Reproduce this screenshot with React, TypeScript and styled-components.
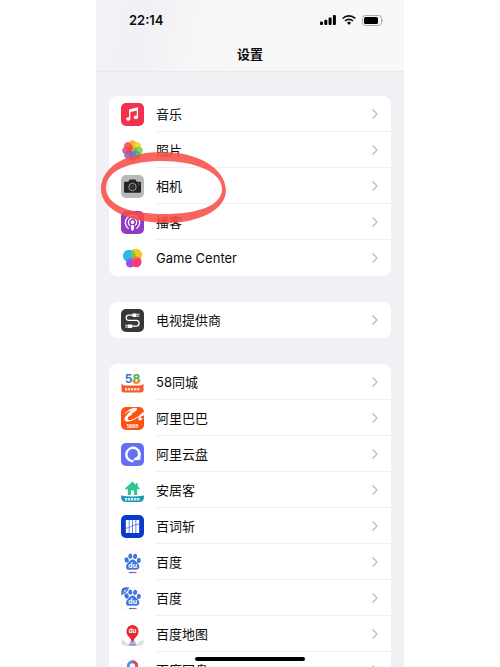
import React from "react";
import styled, { createGlobalStyle } from "styled-components";

const GlobalStyle = createGlobalStyle`
  * { box-sizing: border-box; }
  body {
    margin: 0;
    background: #fff;
    color: #0c0c0d;
    font-family: Inter, "Noto Sans CJK SC", sans-serif;
    overflow: hidden;
  }
`;

const Phone = styled.div`
  height: 100vh;
  margin: 0 96px;
  background: #f0f0f5;
  overflow: hidden;
`;

const Header = styled.header`
  height: 72px;
  background: linear-gradient(100deg, #f3f3f6 0%, #f0f0f5 15%, #f7f7f8 35%, #f8f8f8 100%);
  border-bottom: 1px solid #e9e9ec;
`;

const StatusBar = styled.div`
  display: flex;
  align-items: center;
  justify-content: space-between;
  height: 40px;
  padding: 0 20px 0 33px;
`;

const Clock = styled.time`
  font-size: 13px;
  font-weight: 600;
  line-height: 16px;
`;

const StatusIcons = styled.div`
  display: flex;
  align-items: center;
  gap: 6px;
`;

const Title = styled.h1`
  margin: 4px 0 0;
  font-size: 13px;
  font-weight: 700;
  line-height: 20px;
  text-align: center;
`;

const Content = styled.main`
  display: flex;
  flex-direction: column;
  gap: 26px;
  padding: 24px 13px 0;
`;

const Group = styled.ul`
  margin: 0;
  padding: 0;
  list-style: none;
  background: #fff;
  border-radius: 8px;
`;

const Item = styled.li`
  position: relative;
  display: flex;
  padding-left: 12px;
`;

const RowLink = styled.a`
  display: flex;
  flex: 1;
  gap: 12px;
  align-items: center;
  color: inherit;
  text-decoration: none;
`;

const RowBody = styled.span`
  display: flex;
  flex: 1;
  align-items: center;
  justify-content: space-between;
  height: 36px;
  padding-right: 12px;
  border-bottom: 1px solid #f0f0f2;
  font-size: 13px;
  line-height: 20px;

  ${Item}:last-child & {
    border-bottom-color: transparent;
  }
`;

const Icon = styled.svg`
  flex: none;
  width: 23px;
  height: 23px;
`;

const Circle = styled.svg`
  position: absolute;
  z-index: 1;
  left: -8px;
  top: -16px;
  width: 125px;
  height: 72px;
  pointer-events: none;
`;

const HomeBar = styled.div`
  position: fixed;
  bottom: 6px;
  left: 50%;
  width: 110px;
  height: 4px;
  margin-left: -55px;
  border-radius: 2px;
  background: #000;
`;

const Tile = ({ fill = "#fff", stroke = "none" }: { fill?: string; stroke?: string }) => (
  <rect x="0" y="0" width="23" height="23" rx="5" fill={fill} stroke={stroke} strokeWidth="0.6" />
);

const petals = ["#f7a51c", "#e6d21e", "#8bc53f", "#38b58b", "#4b83d4", "#8c62b8", "#d3478c", "#ee4b38"];

const Paw = () => (
  <g fill="#3d76dc">
    <ellipse cx="5.6" cy="9" rx="2.1" ry="2.7" transform="rotate(-15 5.6 9)" />
    <ellipse cx="9.3" cy="5.2" rx="2" ry="2.6" />
    <ellipse cx="14.1" cy="5.4" rx="2" ry="2.6" transform="rotate(12 14.1 5.4)" />
    <ellipse cx="17.8" cy="9.4" rx="2" ry="2.6" transform="rotate(15 17.8 9.4)" />
    <path d="M11.7 8.6c2.2 0 3.1 2 4.6 3.4 3.1 2.6 2.7 6.8-1.2 6.8-1.3 0-2.1-.3-3.400-.3s-2.1.3-3.500.3c-3.700 0-4.300-4.300-1.200-6.900 1.600-1.400 2.500-3.300 4.700-3.300Z" />
    <text x="11.7" y="17" fill="#fff" fontSize="7" fontWeight="700" textAnchor="middle">du</text>
    <path d="M8 21.5h4" stroke="#4b70c8" strokeWidth="1.2" />
    <path d="M12 21.5h3.5" stroke="#dd5058" strokeWidth="1.2" />
  </g>
);

const art: Record<string, React.ReactNode> = {
  music: (
    <>
      <Tile fill="#f5304f" />
      <path d="M8.7 15.8V6.9L16.4 5v9.2" fill="none" stroke="#fff" strokeWidth="1.3" />
      <path d="M8.7 6.6 16.4 4.8V7.6L8.7 9.3Z" fill="#fff" />
      <ellipse cx="7.2" cy="16" rx="2.2" ry="1.8" fill="#fff" />
      <ellipse cx="14.9" cy="14.4" rx="2.2" ry="1.8" fill="#fff" />
    </>
  ),
  photos: (
    <g>
      {petals.map((color, i) => (
        <rect key={color} x="8" y="1.2" width="7" height="9.8" rx="3.5" fill={color} opacity="0.85" transform={`rotate(${i * 45} 11.5 11.5)`} />
      ))}
    </g>
  ),
  camera: (
    <>
      <Tile fill="#b9b9bc" />
      <path d="M4 6.8h3.3l1.3-2.3h5.8l1.3 2.3H19q1 0 1 1v9q0 1-1 1H4q-1 0-1-1v-9q0-1 1-1Z" fill="#232427" />
      <circle cx="11.5" cy="12" r="3.7" fill="none" stroke="#a9a9ac" strokeWidth="0.9" />
      <circle cx="11.5" cy="12" r="2" fill="#38393c" />
      <circle cx="17.8" cy="8.9" r="0.6" fill="#e2b83a" />
    </>
  ),
  podcasts: (
    <>
      <Tile fill="#8e3cc6" />
      <g fill="none" stroke="#fff" strokeWidth="1.3" strokeLinecap="round">
        <path d="M7.2 17.2a7.2 7.2 0 1 1 8.6 0" />
        <path d="M8.5 14.1a4.1 4.1 0 1 1 6 0" />
      </g>
      <circle cx="11.5" cy="11.1" r="1.9" fill="#fff" />
      <path d="M9.7 14.6q1.8-1 3.6 0l-.6 4.4q-1.2 1.2-2.4 0Z" fill="#fff" />
    </>
  ),
  game: (
    <>
      <circle cx="14.8" cy="8" r="6.2" fill="#f8c51c" />
      <circle cx="8.2" cy="9" r="6.2" fill="#2fb4ee" />
      <path d="M11 3.4a6.2 6.2 0 0 1 2.2 9.3A6.2 6.2 0 0 1 11 3.4Z" fill="#62ce49" />
      <circle cx="9.2" cy="16.2" r="4.3" fill="#9b50e8" />
      <circle cx="15.4" cy="15" r="5.2" fill="#f63c7c" />
      <path d="M10.4 14a5.2 5.2 0 0 1 9.4-2q-5-1.5-9.4 2Z" fill="#f97042" />
    </>
  ),
  tv: (
    <>
      <Tile fill="#38383a" />
      <path d="M13 6.2H7.8a2.6 2.6 0 0 0 0 5.2h7.4a2.9 2.9 0 0 1 0 5.8H11" fill="none" stroke="#fff" strokeWidth="1.3" />
      <path d="M11.5 4.4h4v3.6h-4ZM7 15.4h4.2V19H7Z" fill="#fff" />
      <path d="M15.5 5.3h3M15.5 7.1h3M4.2 16.3H7M4.2 18.1H7" stroke="#fff" strokeWidth="0.9" />
    </>
  ),
  city: (
    <>
      <text x="11.5" y="11.5" fontSize="12" fontWeight="700" textAnchor="middle" fill="#3a79c9">
        5<tspan fill="#4aab43">8</tspan>
      </text>
      <path d="M12.4 9a3 3 0 0 0 6 0" fill="none" stroke="#f18d32" strokeWidth="1.8" />
      <path d="M.5 12.8q2 2 4 1.8h14q2 .2 4-1.8v6.200q0 2.500-2.500 2.500H3Q.5 21.500.5 19Z" fill="#f2592c" />
      <path d="M4 18.200h15" stroke="#ffd9c0" strokeWidth="2.600" strokeDasharray="2.200 .7" />
    </>
  ),
  alibaba: (
    <>
      <Tile fill="#fb5310" />
      <path d="M3 7.4Q8 1.2 14.5.8q2.500 0 1 2.500-2 2.600-5.700 3.700l2.200.7q-4.700 1-5.500 3.800.2 2.700 5.500.7 5.400-2.300 8.300-5.400L22.800 4.500v4.200q-2.700-.5-3.200 2.400-.2 1.500 3.200 0-2.700 3.300-4.600 2.200-1.400-.8-.4-3.300-8.300 5.400-12.700 4.400-4-1.500 1.300-7.100Q8.200 5.200 10.500 3.300 7 4 3 7.400Z" fill="#fff" />
      <text x="11.5" y="20.8" fontSize="5" fontWeight="700" textAnchor="middle" fill="#fff">1688</text>
    </>
  ),
  drive: (
    <>
      <Tile fill="#656ff4" />
      <path d="M16.8 16.2A6.7 6.7 0 1 0 11.5 18.2M17.8 9.5q1.2 5.600-3.900 6.600" fill="none" stroke="#fff" strokeWidth="2.4" strokeLinecap="round" />
      <path d="M16 14.500q1.500 1.300 3 1.500" fill="none" stroke="#fff" strokeWidth="1.6" strokeLinecap="round" />
    </>
  ),
  anjuke: (
    <>
      <Tile stroke="#f2f2f2" />
      <path d="M11.5 2.6 4 9.5l1.2 1.2 1.6-1.3v6.500h3.100v-4.400h3.200v4.400h3.100V9.4l1.6 1.3L19 9.5l-2.300-2V4.2h-1.800v1.6Z" fill="#2fc493" />
      <path d="M0 16.5q11.5 1.8 23 0V18q0 5-5 5H5q-5 0-5-5Z" fill="#219bb2" />
      <path d="M4 20.2h15" stroke="#c8f3f4" strokeWidth="2.4" strokeDasharray="2.2 .7" />
    </>
  ),
  words: (
    <>
      <Tile fill="#0b39cb" />
      <path d="M4.8 5h3v13h-3ZM8.4 5h2.8v13H8.4ZM11.8 5h2.8v13h-2.8ZM15.2 5h3v13h-3Z" fill="#fff" />
      <path d="M4.8 13.2q3.5-.2 6-2t7.4-2" fill="none" stroke="#6480d9" strokeWidth="0.9" />
    </>
  ),
  baidu: (
    <>
      <Tile stroke="#eee8e8" />
      <Paw />
    </>
  ),
  baiduLite: (
    <>
      <Tile stroke="#eeeeee" />
      <Paw />
      <path d="M0 8.5V5Q0 0 5 0h3.500Q7 6.500 0 8.500Z" fill="#3e70d8" stroke="#fff" strokeWidth="0.6" />
      <path d="m2 6 4-4M3 3l2 2" stroke="#b8cdf8" strokeWidth="0.9" />
    </>
  ),
  map: (
    <>
      <Tile stroke="#ececec" />
      <path d="M.3 17.2q4.5-.6 7.500 5.500H4.500Q.3 22.500.3 18.500ZM22.700 17.2q-4.500-.6-7.500 5.500h3.300q4.200-.2 4.200-4.200Z" fill="#d3ead5" />
      <path d="m9.5 17.5-2.500 5h9l-2.500-5Z" fill="#a9bde8" />
      <path d="M8.5 22h6" stroke="#6b80c8" strokeWidth="1" />
      <path d="M11.5 20q-1-3.800-3.900-6.500C5.900 11.700 5.300 9.900 5.500 8a6 6 0 0 1 12 0c.2 1.900-.4 3.700-2.100 5.500Q12.500 16.200 11.500 20Z" fill="#e9292e" />
      <text x="11.5" y="10.3" fontSize="6" fontWeight="700" textAnchor="middle" fill="#fff">du</text>
    </>
  ),
  netdisk: (
    <>
      <Tile stroke="#eeeeee" />
      <g fill="none" strokeWidth="3">
        <circle cx="6.8" cy="13.5" r="4" stroke="#28a8ec" />
        <circle cx="16.2" cy="13.5" r="4" stroke="#ee4454" />
        <circle cx="11.5" cy="7" r="4.2" stroke="#3d9be8" />
        <path d="M11.5 2.8a4.2 4.2 0 0 1 4.2 4.2" stroke="#e9475b" />
      </g>
    </>
  ),
};

const groups = [
  [
    ["music", "音乐"],
    ["photos", "照片"],
    ["camera", "相机"],
    ["podcasts", "播客"],
    ["game", "Game Center"],
  ],
  [["tv", "电视提供商"]],
  [
    ["city", "58同城"],
    ["alibaba", "阿里巴巴"],
    ["drive", "阿里云盘"],
    ["anjuke", "安居客"],
    ["words", "百词斩"],
    ["baidu", "百度"],
    ["baiduLite", "百度"],
    ["map", "百度地图"],
    ["netdisk", "百度网盘"],
  ],
];

const Chevron = () => (
  <svg width="8" height="12" viewBox="0 0 8 12" fill="none" stroke="#bdbdc0" strokeWidth="1.4" aria-hidden="true">
    <path d="m1.5 1.5 4.5 4.5-4.5 4.5" />
  </svg>
);

const Signal = () => (
  <svg width="16" height="10" viewBox="0 0 16 10" aria-hidden="true">
    <rect x="0" y="6.5" width="3" height="3.5" rx="1" />
    <rect x="4.3" y="4.8" width="3" height="5.2" rx="1" />
    <rect x="8.6" y="2.6" width="3" height="7.4" rx="1" />
    <rect x="12.9" y="0" width="3" height="10" rx="1" />
  </svg>
);

const Wifi = () => (
  <svg width="14" height="10" viewBox="0 0 14 10" fill="none" stroke="#0c0c0d" strokeWidth="1.7" aria-hidden="true">
    <path d="M.7 3.5a9 9 0 0 1 12.6 0M3 6a5.7 5.7 0 0 1 8 0" />
    <path d="M4.9 7.7q2.1-1.7 4.2 0L7 10Z" fill="#0c0c0d" stroke="none" />
  </svg>
);

const Battery = () => (
  <svg width="22" height="11" viewBox="0 0 22 11" aria-hidden="true">
    <rect x="0.5" y="0.5" width="19" height="10" rx="3" fill="none" stroke="#a9a9ab" />
    <rect x="2" y="2" width="14" height="7" rx="1.5" />
    <path d="M20.5 3.7q1.5 1.8 0 3.6Z" fill="#a9a9ab" />
  </svg>
);

export default function App() {
  return (
    <>
      <GlobalStyle />
      <Phone>
        <Header>
          <StatusBar>
            <Clock>22:14</Clock>
            <StatusIcons>
              <Signal />
              <Wifi />
              <Battery />
            </StatusIcons>
          </StatusBar>
          <Title>设置</Title>
        </Header>
        <Content>
          {groups.map((rows, g) => (
            <Group key={g}>
              {rows.map(([icon, label]) => (
                <Item key={icon}>
                  <RowLink href={`#${icon}`}>
                    <Icon viewBox="0 0 23 23" aria-hidden="true">{art[icon]}</Icon>
                    <RowBody>
                      {label}
                      <Chevron />
                    </RowBody>
                  </RowLink>
                  {icon === "camera" && (
                    <Circle viewBox="0 0 125 72" aria-hidden="true">
                      <path
                        d="M0 36C1 13 28 0 61 0c36 0 63 16 64 38 0 20-27 33-60 33C29 71-1 58 0 36Zm5 0c0 17 24 26 58 26 33 0 58-8 58-25C121 20 94 9 61 9 30 9 5 18 5 36Z"
                        fill="#f94b43"
                        fillRule="evenodd"
                        opacity="0.86"
                      />
                    </Circle>
                  )}
                </Item>
              ))}
            </Group>
          ))}
        </Content>
      </Phone>
      <HomeBar />
    </>
  );
}
